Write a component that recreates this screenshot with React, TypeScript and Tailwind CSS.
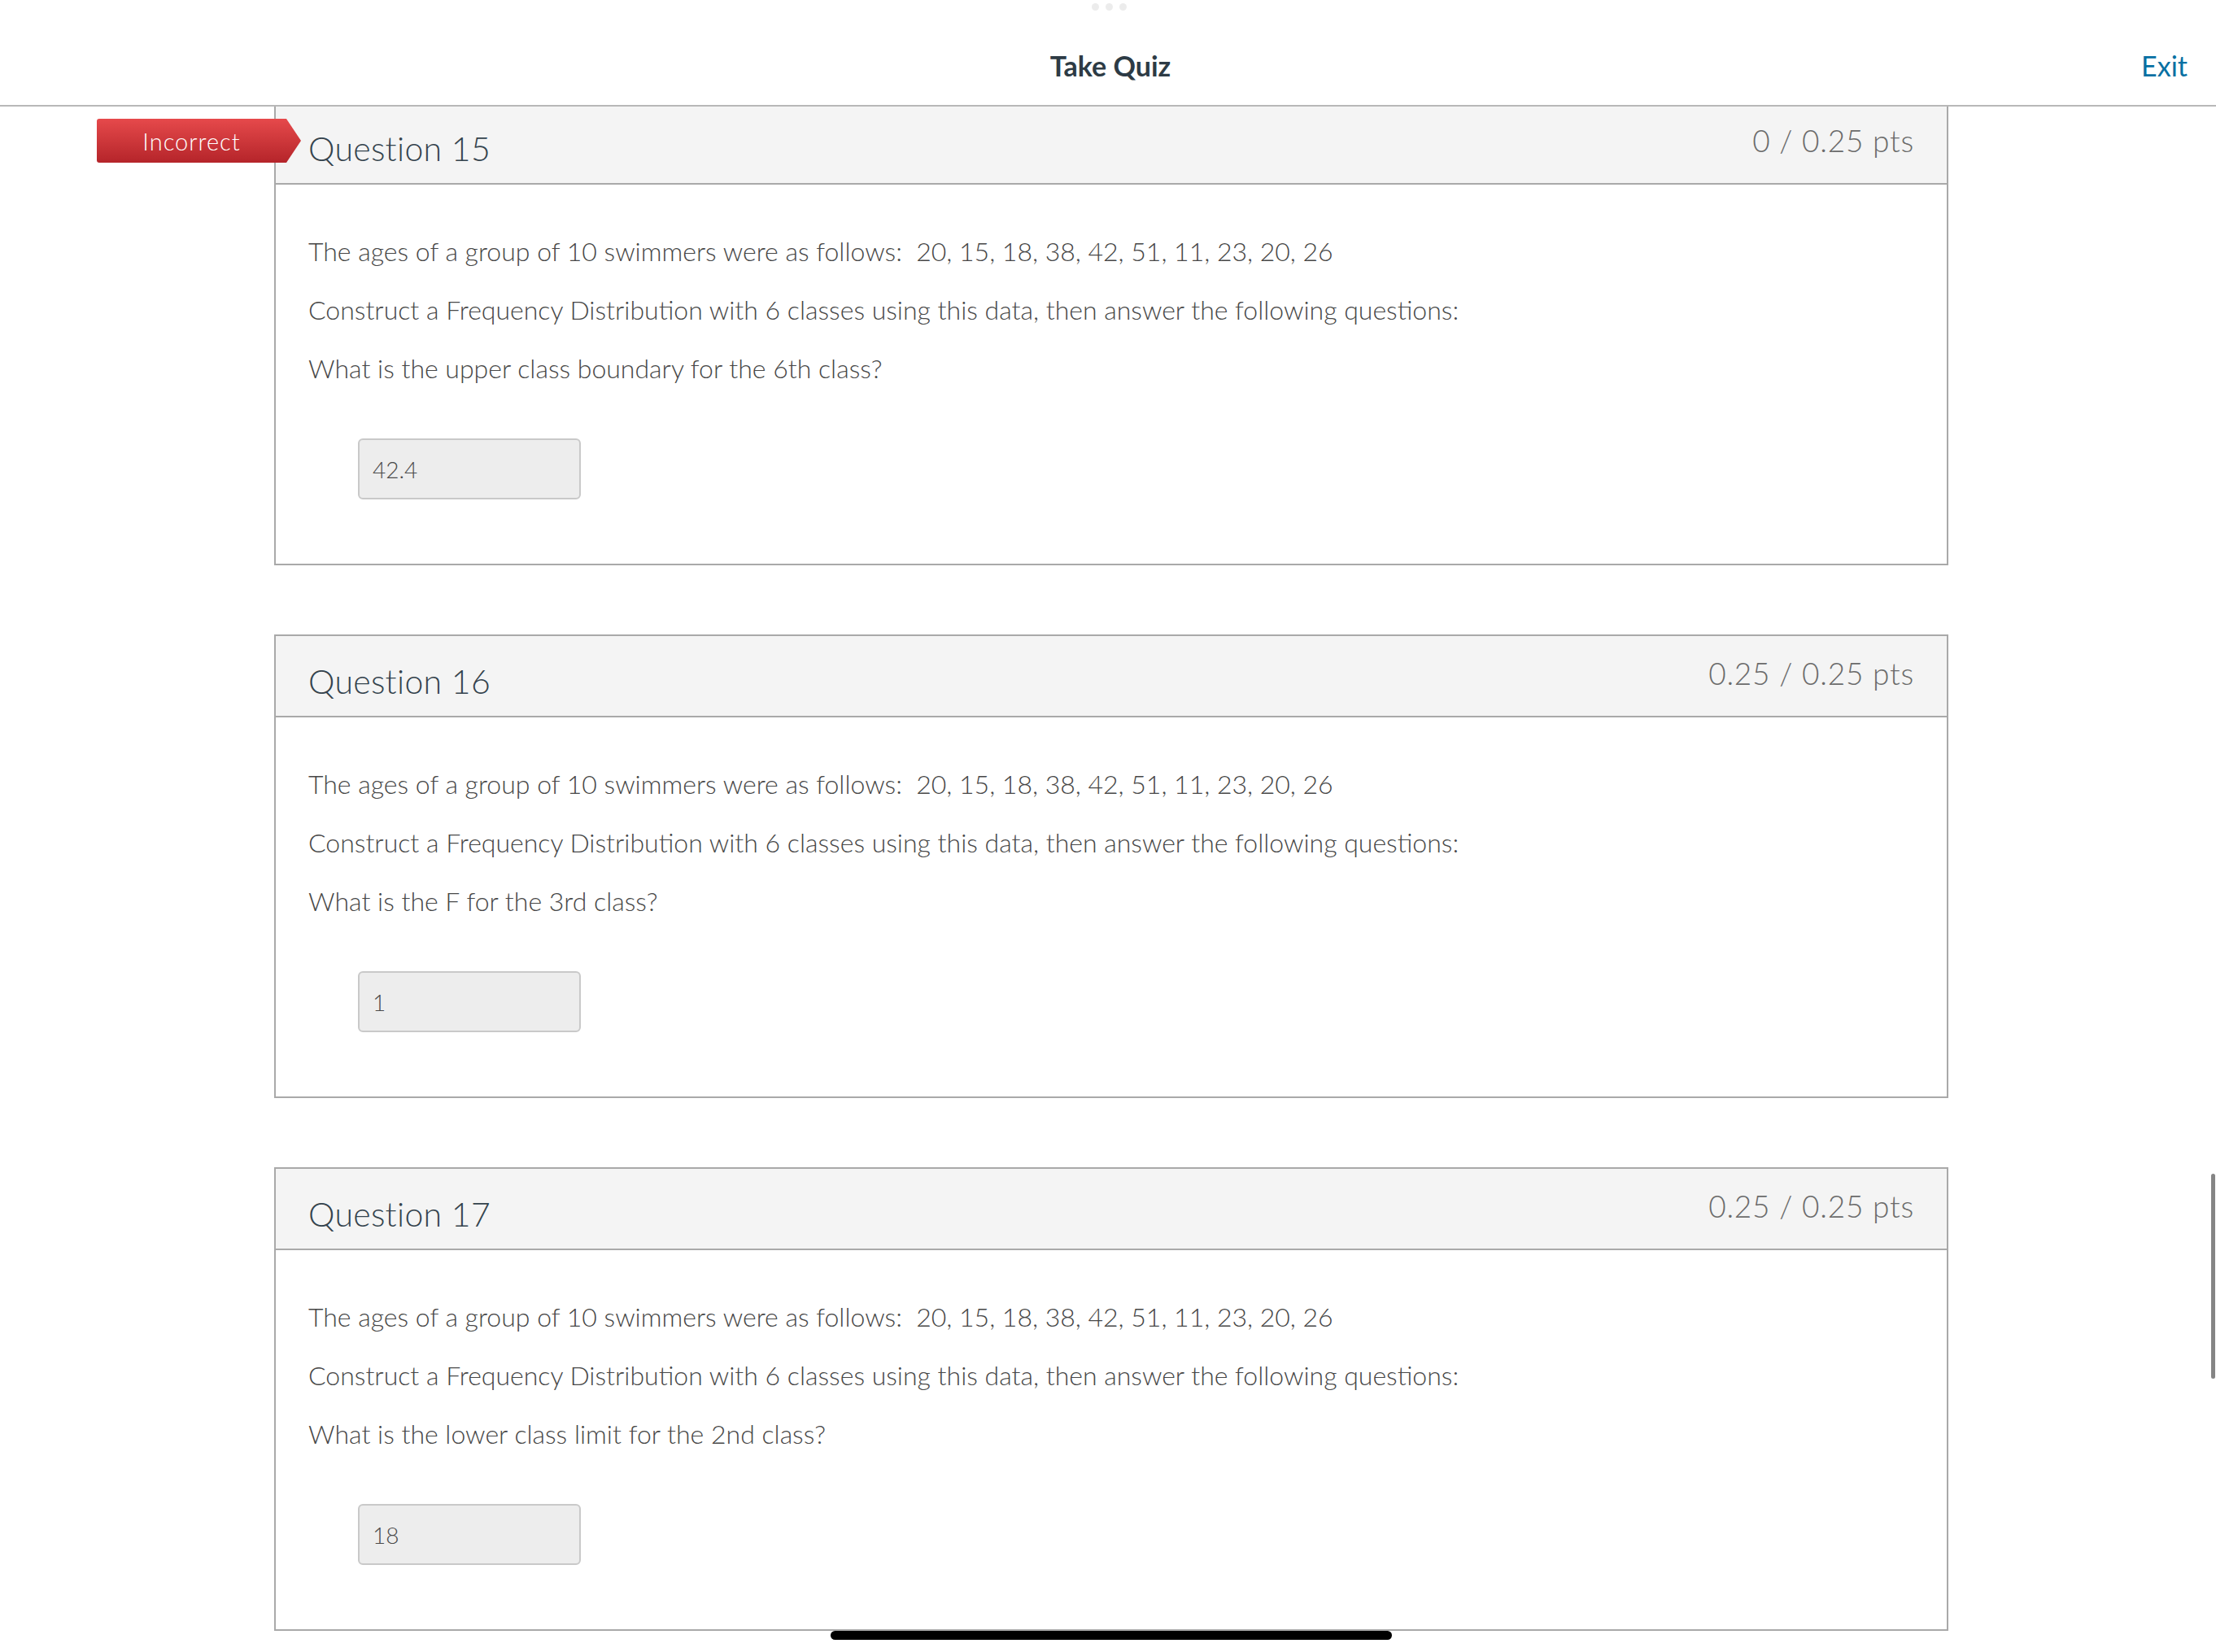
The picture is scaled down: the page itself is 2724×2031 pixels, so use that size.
const questions = [
  { n: 15, pts: "0 / 0.25 pts", ask: "What is the upper class boundary for the 6th class?", answer: "42.4", incorrect: true },
  { n: 16, pts: "0.25 / 0.25 pts", ask: "What is the F for the 3rd class?", answer: "1", incorrect: false },
  { n: 17, pts: "0.25 / 0.25 pts", ask: "What is the lower class limit for the 2nd class?", answer: "18", incorrect: false },
];

function IncorrectFlag() {
  return (
    <div className="absolute left-[-220px] top-[19px] h-[54px] w-[251px] rounded-l-[3px] bg-gradient-to-b from-[#e6494b] to-[#b5242a] pr-[18px] [clip-path:polygon(0_0,calc(100%-18px)_0,100%_50%,calc(100%-18px)_100%,0_100%)] flex items-center justify-center">
      <span className="font-['Lato_Light','Lato',sans-serif] text-[29px] leading-none tracking-[1px] text-white">Incorrect</span>
    </div>
  );
}

function QuestionCard({ q, first }: { q: (typeof questions)[number]; first?: boolean }) {
  return (
    <div className={`relative ml-[337px] w-[2058px] border-2 border-[#a9a9a9] ${first ? "-mt-[6px]" : ""}`}>
      {q.incorrect && <IncorrectFlag />}
      <div className="flex h-[100px] items-start justify-between border-b-2 border-[#a9a9a9] bg-[#f4f4f4] px-[40px] font-['Lato_Light','Lato',sans-serif]">
        <div className="mt-[36px] text-[41px] leading-[40px] font-light tracking-[0.3px] text-[#34434d]">Question {q.n}</div>
        <div className="mt-[28px] text-[37px] leading-[36px] font-light tracking-[0.8px] text-[#6b6b6b]">{q.pts}</div>
      </div>
      <div className="px-[40px] pt-[59px] pb-[79px] font-['Lato_Light','Lato',sans-serif] text-[32px] leading-[46px] font-light text-[#474747]">
        <p className="mb-[26px]">The ages of a group of 10 swimmers were as follows:&nbsp; 20, 15, 18, 38, 42, 51, 11, 23, 20, 26</p>
        <p className="mb-[26px]">Construct a Frequency Distribution with 6 classes using this data, then answer the following questions:</p>
        <p>{q.ask}</p>
        <div className="mt-[63px] ml-[61px] flex h-[75px] w-[274px] items-center rounded-[6px] border-2 border-[#c9c9c9] bg-[#ededed] px-[16px] text-[28px] font-light text-[#4a4a4a]">
          {q.answer}
        </div>
      </div>
    </div>
  );
}

export default function App() {
  return (
    <div className="relative h-[2031px] w-[2724px] overflow-hidden bg-white font-['Lato','Liberation_Sans',sans-serif]">
      <div className="absolute left-[1342px] top-[4px] flex gap-[8px]">
        <div className="h-[9px] w-[9px] rounded-full bg-[#ececec]" />
        <div className="h-[9px] w-[9px] rounded-full bg-[#ececec]" />
        <div className="h-[9px] w-[9px] rounded-full bg-[#ececec]" />
      </div>
      <header className="grid h-[131px] grid-cols-3 items-center border-b-2 border-[#b8b8b8] pt-[31px]">
        <div />
        <div className="pl-[6px] text-center text-[34px] font-bold text-[#2d3b45]">Take Quiz</div>
        <div className="pr-[35px] text-right">
          <span className="text-[34px] text-[#0770a3]">Exit</span>
        </div>
      </header>
      <main className="flex flex-col gap-[85px] overflow-hidden">
        {questions.map((q, i) => (
          <QuestionCard key={q.n} q={q} first={i === 0} />
        ))}
      </main>
      <div className="absolute right-[1px] top-[1443px] h-[252px] w-[5px] rounded-full bg-[#858585]" />
      <div className="absolute left-[1021px] top-[2005px] h-[11px] w-[690px] rounded-full bg-black" />
    </div>
  );
}
